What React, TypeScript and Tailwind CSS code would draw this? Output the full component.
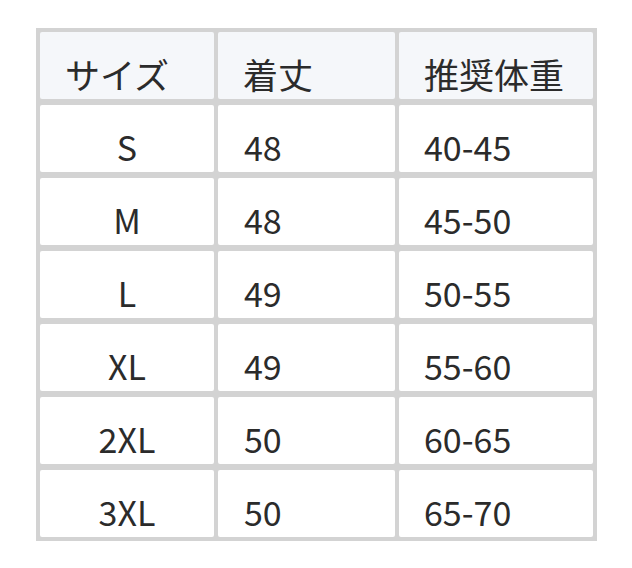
const header = ['サイズ', '着丈', '推奨体重'];

const rows = [
  ['S', '48', '40-45'],
  ['M', '48', '45-50'],
  ['L', '49', '50-55'],
  ['XL', '49', '55-60'],
  ['2XL', '50', '60-65'],
  ['3XL', '50', '65-70'],
];

export default function App() {
  return (
    <div
      className="min-h-screen bg-white pt-[28px] pl-[36px]"
      style={{ fontFamily: '"Noto Sans CJK JP", "Noto Sans", sans-serif' }}
    >
      <div className="grid w-[561px] grid-cols-[174px_177px_194px] gap-x-[4px] gap-y-[6px] border-[4px] border-[#d3d3d3] bg-[#d3d3d3] text-[34px] leading-[1.5] font-normal text-[#2b2b2b]">
        {header.map((h) => (
          <div
            key={h}
            className="flex h-[67px] items-center rounded-[2px] bg-[#f5f7fa] pt-[18px] pl-[25px] text-[35px]"
          >
            {h}
          </div>
        ))}
        {rows.map((r) => (
          <>
            <div
              key={r[0] + 'a'}
              className="flex h-[67px] items-center justify-center rounded-[2px] bg-white pt-[16px]"
            >
              {r[0]}
            </div>
            <div
              key={r[0] + 'b'}
              className="flex h-[67px] items-center rounded-[2px] bg-white pt-[16px] pl-[26px]"
            >
              {r[1]}
            </div>
            <div
              key={r[0] + 'c'}
              className="flex h-[67px] items-center rounded-[2px] bg-white pt-[16px] pl-[25px]"
            >
              {r[2]}
            </div>
          </>
        ))}
      </div>
    </div>
  );
}
